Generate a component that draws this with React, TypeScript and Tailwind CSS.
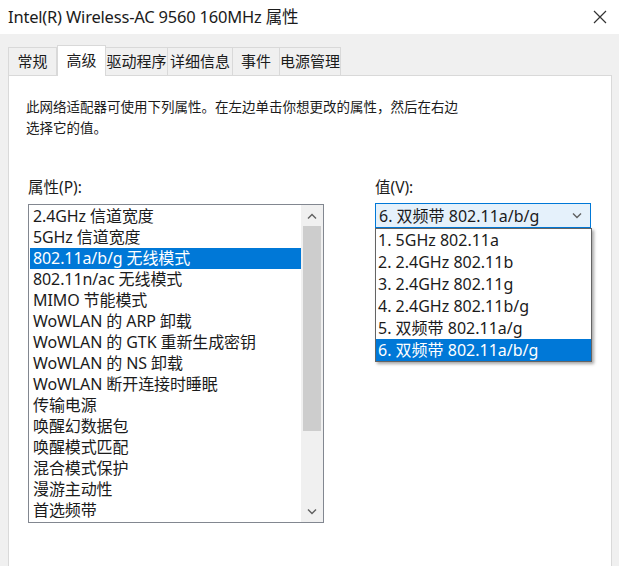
const font = { fontFamily: '"Noto Sans", "Noto Sans CJK SC", sans-serif' };

const tabs = ["常规", "高级", "驱动程序", "详细信息", "事件", "电源管理"];
const tabWidths = ["w-[49px]", "w-[49px]", "w-[62px]", "w-[65px]", "w-[47px]", "w-[61px]"];

const props = [
  "2.4GHz 信道宽度",
  "5GHz 信道宽度",
  "802.11a/b/g 无线模式",
  "802.11n/ac 无线模式",
  "MIMO 节能模式",
  "WoWLAN 的 ARP 卸载",
  "WoWLAN 的 GTK 重新生成密钥",
  "WoWLAN 的 NS 卸载",
  "WoWLAN 断开连接时睡眠",
  "传输电源",
  "唤醒幻数据包",
  "唤醒模式匹配",
  "混合模式保护",
  "漫游主动性",
  "首选频带",
];

const values = [
  "1. 5GHz 802.11a",
  "2. 2.4GHz 802.11b",
  "3. 2.4GHz 802.11g",
  "4. 2.4GHz 802.11b/g",
  "5. 双频带 802.11a/g",
  "6. 双频带 802.11a/b/g",
];

const Chevron = ({ up }: { up?: boolean }) => (
  <svg width="10" height="6" viewBox="0 0 10 6" fill="none" stroke="#606060" strokeWidth="1.4">
    {up ? <path d="M1 5.5 L5 1.5 L9 5.5" /> : <path d="M1 0.5 L5 4.5 L9 0.5" />}
  </svg>
);

export default function App() {
  return (
    <div className="w-[619px] h-[566px] bg-[#f0f0f0] overflow-hidden text-[#1b1b1b]" style={font}>
      <div className="h-[34px] bg-white flex items-center justify-between pl-[8px] pr-[12px]">
        <span className="text-[16.5px] tracking-[-0.2px]">Intel(R) Wireless-AC 9560 160MHz 属性</span>
        <svg width="14" height="14" viewBox="0 0 14 14" stroke="#333" strokeWidth="1.2">
          <path d="M1 1 L13 13 M13 1 L1 13" />
        </svg>
      </div>

      <div className="pl-[8px] pt-[11px]">
        <div className="flex items-end h-[30px]">
          {tabs.map((t, i) =>
            i === 1 ? (
              <div
                key={t}
                className={`${tabWidths[i]} h-[31px] bg-white border border-b-0 border-[#d9d9d9] flex items-start justify-center pt-[3px] text-[15px] -mb-px relative z-10`}
              >
                {t}
              </div>
            ) : (
              <div
                key={t}
                className={`${tabWidths[i]} h-[28px] bg-[#f0f0f0] border border-b-0 border-[#d9d9d9] flex items-center justify-center text-[15px] ${i > 1 ? "border-l-0" : ""}`}
              >
                {t}
              </div>
            ),
          )}
        </div>

        <div className="w-[604px] h-[500px] bg-white border border-[#d9d9d9] pl-[17px] pt-[21px]">
          <p className="text-[13.5px] leading-[21px] w-[480px]">
            此网络适配器可使用下列属性。在左边单击你想更改的属性，然后在右边
            <br />
            选择它的值。
          </p>

          <div className="flex mt-[38px]">
            <div className="w-[347px] pl-[2px]">
              <div className="text-[15.5px] leading-[20px]">属性(P):</div>
              <div className="mt-[7px] w-[296px] h-[319px] border border-[#828790] flex">
                <div className="flex-1 pl-[1px] pt-[1px]">
                  {props.map((p, i) => (
                    <div
                      key={p}
                      className={`h-[21px] leading-[21px] text-[16px] tracking-[-0.1px] pl-[3px] whitespace-nowrap ${
                        i === 2 ? "bg-[#0078d7] text-white" : ""
                      }`}
                    >
                      {p}
                    </div>
                  ))}
                </div>
                <div className="w-[22px] bg-[#f0f0f0] flex flex-col">
                  <div className="h-[21px] flex items-center justify-center">
                    <Chevron up />
                  </div>
                  <div className="flex-1 px-[2px]">
                    <div className="h-[205px] bg-[#cdcdcd]" />
                  </div>
                  <div className="h-[21px] flex items-center justify-center">
                    <Chevron />
                  </div>
                </div>
              </div>
            </div>

            <div className="w-[218px] pl-[2px]">
              <div className="text-[15.5px] leading-[20px]">值(V):</div>
              <div className="mt-[6px] h-[25px] bg-[#e5f1fb] border border-[#0078d7] flex items-center justify-between pl-[3px] pr-[8px] text-[16px]">
                <span>6. 双频带 802.11a/b/g</span>
                <Chevron />
              </div>
              <div className="relative">
                <div className="absolute left-0 top-0 w-[217px] bg-white border border-[#646464] shadow-[2px_2px_3px_rgba(0,0,0,0.35)]">
                  {values.map((v, i) => (
                    <div
                      key={v}
                      className={`h-[22px] leading-[22px] text-[16px] pl-[2px] whitespace-nowrap ${
                        i === 5 ? "bg-[#0078d7] text-white" : ""
                      }`}
                    >
                      {v}
                    </div>
                  ))}
                </div>
              </div>
            </div>
          </div>
        </div>
      </div>
    </div>
  );
}
